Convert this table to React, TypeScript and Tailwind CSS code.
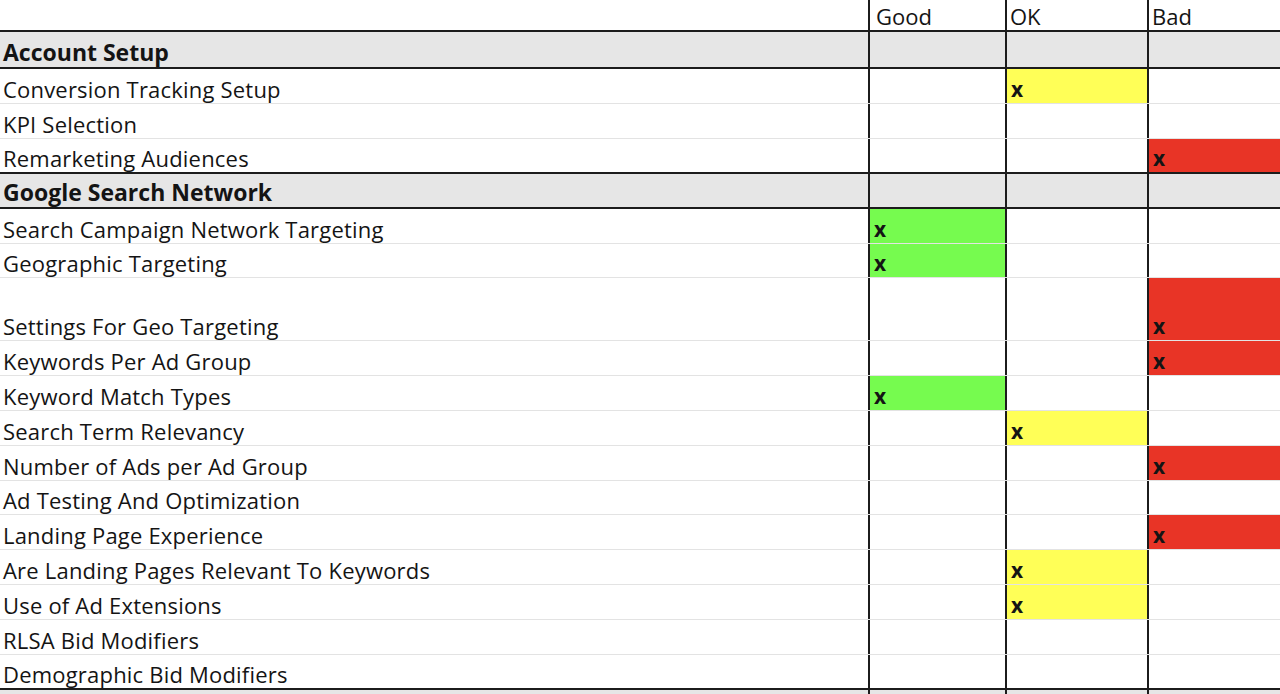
import React from 'react';

type Mark = 'good' | 'ok' | 'bad' | null;

interface Row {
  label: string;
  h: string;
  mark?: Mark;
  section?: boolean;
}

const rows: Row[] = [
  { label: 'Account Setup', section: true, h: 'h-[37px]' },
  { label: 'Conversion Tracking Setup', mark: 'ok', h: 'h-[35px]' },
  { label: 'KPI Selection', h: 'h-[35px]' },
  { label: 'Remarketing Audiences', mark: 'bad', h: 'h-[35px]' },
  { label: 'Google Search Network', section: true, h: 'h-[35px]' },
  { label: 'Search Campaign Network Targeting', mark: 'good', h: 'h-[35px]' },
  { label: 'Geographic Targeting', mark: 'good', h: 'h-[34px]' },
  { label: 'Settings For Geo Targeting', mark: 'bad', h: 'h-[63px]' },
  { label: 'Keywords Per Ad Group', mark: 'bad', h: 'h-[35px]' },
  { label: 'Keyword Match Types', mark: 'good', h: 'h-[35px]' },
  { label: 'Search Term Relevancy', mark: 'ok', h: 'h-[35px]' },
  { label: 'Number of Ads per Ad Group', mark: 'bad', h: 'h-[35px]' },
  { label: 'Ad Testing And Optimization', h: 'h-[34px]' },
  { label: 'Landing Page Experience', mark: 'bad', h: 'h-[35px]' },
  { label: 'Are Landing Pages Relevant To Keywords', mark: 'ok', h: 'h-[35px]' },
  { label: 'Use of Ad Extensions', mark: 'ok', h: 'h-[35px]' },
  { label: 'RLSA Bid Modifiers', h: 'h-[35px]' },
  { label: 'Demographic Bid Modifiers', h: 'h-[35px]' },
];

const fills = {
  good: 'bg-[#76fb4f]',
  ok: 'bg-[#ffff57]',
  bad: 'bg-[#e83426]',
};

function MarkCell({ active, kind, width }: { active: boolean; kind: 'good' | 'ok' | 'bad'; width: string }) {
  return (
    <div className={`${width} shrink-0 border-l-2 border-[#1c1c1c] flex items-end pl-[4px] pb-[3px] ${active ? fills[kind] : ''}`}>
      {active && <span className="text-[21px] font-bold leading-none">x</span>}
    </div>
  );
}

export default function App() {
  return (
    <div className="w-[1280px] h-[694px] overflow-hidden bg-white text-[#141414] font-['Open_Sans','Liberation_Sans',sans-serif]">
      {/* Header */}
      <div className="flex h-[32px] border-b-2 border-[#1c1c1c]">
        <div className="w-[868px] shrink-0" />
        <div className="w-[137px] shrink-0 border-l-2 border-[#1c1c1c] flex items-end pl-[6px] pb-[3px] text-[22px] leading-none">Good</div>
        <div className="w-[142px] shrink-0 border-l-2 border-[#1c1c1c] flex items-end pl-[3px] pb-[3px] text-[22px] leading-none">OK</div>
        <div className="flex-1 border-l-2 border-[#1c1c1c] flex items-end pl-[3px] pb-[3px] text-[22px] leading-none">Bad</div>
      </div>

      {rows.map((row, i) => {
        const next = rows[i + 1];
        const thickBottom = row.section || (next && next.section) || i === rows.length - 1;
        const border = thickBottom ? 'border-b-2 border-[#1c1c1c]' : 'border-b border-[#e3e3e3]';
        return (
          <div key={row.label} className={`flex ${row.h} ${border} ${row.section ? 'bg-[#e6e6e6]' : ''}`}>
            <div
              className={`w-[868px] shrink-0 flex items-end pl-[3px] ${
                row.section ? 'text-[23px] font-bold pb-[3px]' : 'text-[22px] tracking-[0.2px] pb-[3px]'
              } leading-none whitespace-nowrap`}
            >
              {row.label}
            </div>
            <MarkCell active={row.mark === 'good'} kind="good" width="w-[137px]" />
            <MarkCell active={row.mark === 'ok'} kind="ok" width="w-[142px]" />
            <MarkCell active={row.mark === 'bad'} kind="bad" width="flex-1" />
          </div>
        );
      })}

      <div className="flex h-[40px] bg-[#e6e6e6]">
        <div className="w-[868px] shrink-0" />
        <div className="w-[137px] shrink-0 border-l-2 border-[#1c1c1c]" />
        <div className="w-[142px] shrink-0 border-l-2 border-[#1c1c1c]" />
        <div className="flex-1 border-l-2 border-[#1c1c1c]" />
      </div>
    </div>
  );
}
